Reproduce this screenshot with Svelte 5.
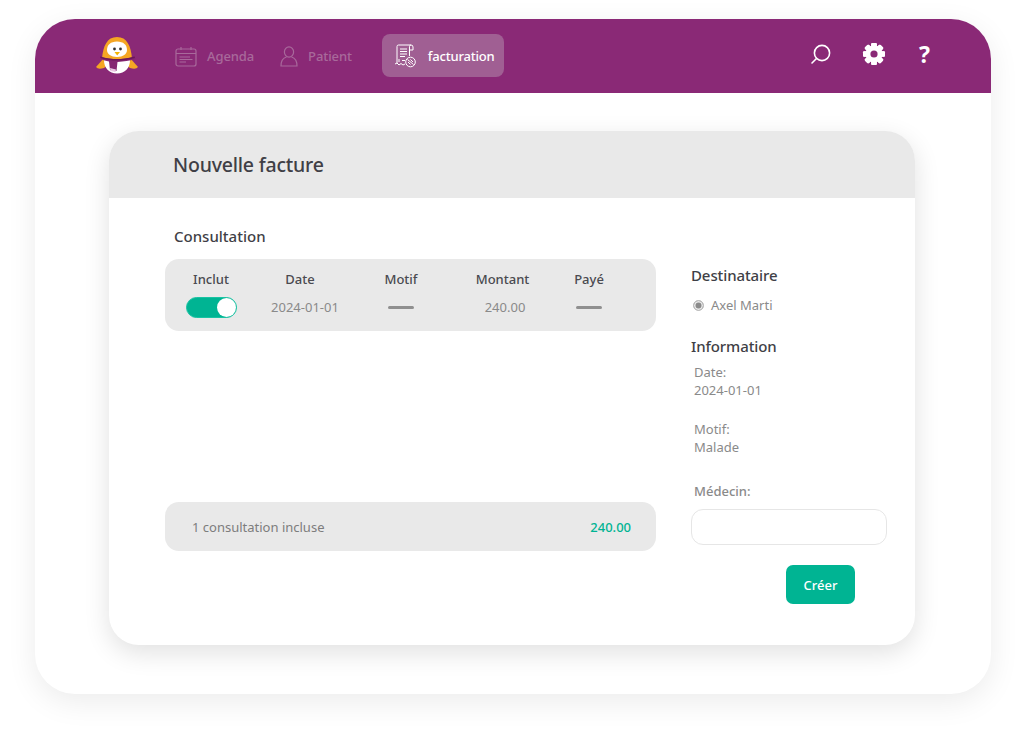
<script>
	let included = $state(true);
	const rows = [{ date: '2024-01-01', amount: '240.00' }];
	const teeth = [0, 45, 90, 135, 180, 225, 270, 315];
</script>

<div class="page">
	<div class="window">
		<header class="topbar">
			<svg class="logo" width="44" height="42" viewBox="0 0 44 42" aria-label="Logo">
				<path d="M8 23 L0 32 Q2 35 8 33 L12 30 Z" fill="#f5a623" />
				<path d="M34 23 L42 32 Q40 35 34 33 L30 30 Z" fill="#f5a623" />
				<path d="M21 2 C11 2 7 11 6 24 L36 24 C35 11 31 2 21 2 Z" fill="#f5a623" />
				<path d="M21 6.5 C14.5 6.5 11 10 11 15 C11 19 15 22 21 22 C27 22 31 19 31 15 C31 10 27.5 6.5 21 6.5 Z" fill="#fff" />
				<path d="M8 25 C8 33 13 38.5 21 38.5 C29 38.5 34 33 34 25 Z" fill="#fff" />
				<path d="M4 21.5 C10 23.5 16 24 21 24 C26 24 32 23.5 38.5 21.5 L39.5 24 C33 26 28 26.5 21.5 27 L20.5 36 L14 35 L13 26.5 C10 26 7 25 5 24 Z" fill="#862672" />
				<path d="M4 21.5 C10 23.5 16 24 21 24 C26 24 32 23.5 38.5 21.5 L39 23 C32 25 26 25.5 21 25.5 C16 25.5 10 25 4.5 23 Z" fill="#6a1859" />
				<path d="M14 33 L20 34.5 L19.5 37 L14.5 36 Z" fill="#e9c6e0" />
				<circle cx="18.5" cy="14" r="1.4" fill="#333" />
				<circle cx="24.5" cy="14" r="1.4" fill="#333" />
				<path d="M18.5 17 L24 17 L21.2 20.5 Z" fill="#f5b400" />
			</svg>
			<nav class="nav">
				<a class="nav-item" href="#agenda">
					<svg width="22" height="21" viewBox="0 0 22 21" fill="none" stroke="currentColor" stroke-width="1.2">
						<rect x="1" y="3" width="20" height="17" rx="2" />
						<path d="M1 7.5 H21 M6 1 V4 M16 1 V4 M4.5 11 H15 M4.5 13.5 H17.5 M4.5 16 H11" />
					</svg>
					<span>Agenda</span>
				</a>
				<a class="nav-item" href="#patient">
					<svg width="18" height="21" viewBox="0 0 18 21" fill="none" stroke="currentColor" stroke-width="1.2">
						<ellipse cx="9" cy="6" rx="4.6" ry="5.2" />
						<path d="M6.5 11 C3 12 1 15 1 20 H17 C17 15 15 12 11.5 11" />
					</svg>
					<span>Patient</span>
				</a>
				<a class="nav-item active" href="#facturation">
					<svg width="22" height="24" viewBox="0 0 22 24" fill="none" stroke="currentColor" stroke-width="1">
						<path d="M3 19 V2.5 Q3 1 4.5 1 H17 Q15.5 1 15.5 2.5 V12 M17 1 Q19 1 19 3 V6 H15.5" />
						<path d="M6 5 H13 M6 7.5 H13 M6 10 H13 M6 12.5 H11 M5 15 V18 M8 16.5 H11" />
						<path d="M1 20 L3 19 L5 21 L7 19.5 L9 21 L11 20" />
						<circle cx="16.5" cy="18" r="4.8" />
						<path d="M13.5 15.5 L19.5 20.5 M14 18 L16.5 20.5 M16.5 15.5 L19 18" />
					</svg>
					<span>facturation</span>
				</a>
			</nav>
			<div class="tools">
				<svg width="22" height="22" viewBox="0 0 22 22" fill="none" stroke="#fff" stroke-width="1.6" aria-label="Rechercher">
					<circle cx="12" cy="10" r="7.6" />
					<path d="M6.5 15.5 L2 20" stroke-linecap="round" />
				</svg>
				<svg width="24" height="24" viewBox="0 0 24 24" aria-label="Réglages">
					{#each teeth as angle}
						<rect x="9.2" y="1" width="5.6" height="22" rx="1.2" fill="#fff" transform="rotate({angle} 12 12)" />
					{/each}
					<circle cx="12" cy="12" r="8.4" fill="#fff" />
					<circle cx="12" cy="12" r="3.6" fill="#8a2976" />
				</svg>
				<span class="help">?</span>
			</div>
		</header>

		<main class="content">
			<section class="card">
				<h1 class="card-title">Nouvelle facture</h1>
				<div class="card-body">
					<div class="left">
						<h2 class="consult-title">Consultation</h2>
						<div class="table">
							<div class="th th-inclut">Inclut</div>
							<div class="th th-date">Date</div>
							<div class="th">Motif</div>
							<div class="th th-montant">Montant</div>
							<div class="th">Payé</div>
							{#each rows as row}
								<button class="toggle" class:on={included} aria-label="Inclut" onclick={() => (included = !included)}>
									<span class="knob"></span>
								</button>
								<div class="td">{row.date}</div>
								<div class="dash"></div>
								<div class="td">{row.amount}</div>
								<div class="dash"></div>
							{/each}
						</div>
						<div class="summary">
							<span>1 consultation incluse</span>
							<strong>240.00</strong>
						</div>
					</div>

					<aside class="right">
						<h3 class="side-title">Destinataire</h3>
						<div class="recipient">
							<span class="radio"></span>
							<span>Axel Marti</span>
						</div>
						<h3 class="side-title info-title">Information</h3>
						<div class="info">Date:<br />2024-01-01</div>
						<div class="info motif">Motif:<br />Malade</div>
						<label class="doctor" for="medecin">Médecin:</label>
						<input id="medecin" class="doctor-input" type="text" />
						<button class="create">Créer</button>
					</aside>
				</div>
			</section>
		</main>
	</div>
</div>

<style>
	:global(body) {
		background: #fff;
		font-family: 'Noto Sans', 'Open Sans', sans-serif;
	}

	.page {
		height: 738px;
		box-sizing: border-box;
		padding: 19px 33px 0 35px;
		overflow: hidden;
	}

	.window {
		height: 675px;
		background: #fff;
		border-radius: 40px;
		box-shadow: 0 8px 30px rgba(0, 0, 0, 0.08);
		overflow: hidden;
	}

	.topbar {
		height: 74px;
		background: #8a2976;
		display: flex;
		align-items: center;
		padding: 0 61px 0 61px;
	}

	.logo {
		margin-top: -1px;
	}

	.nav {
		display: flex;
		align-items: center;
		margin-left: 35px;
	}

	.nav-item {
		display: flex;
		align-items: center;
		gap: 10px;
		color: #a8699b;
		font-size: 13px;
		font-weight: 500;
		letter-spacing: -0.1px;
		text-decoration: none;
		margin-right: 26px;
	}

	.nav-item.active {
		width: 122px;
		height: 43px;
		box-sizing: border-box;
		padding-left: 12px;
		margin: -1px 0 0 4px;
		gap: 12px;
		background: #a05f93;
		border-radius: 8px;
		color: #fff;
		letter-spacing: -0.2px;
	}

	.tools {
		margin-left: auto;
		margin-top: -4px;
		display: flex;
		align-items: center;
		gap: 30px;
	}

	.help {
		color: #fff;
		font-size: 23px;
		font-weight: 700;
		line-height: 24px;
		margin-left: 3px;
	}

	.content {
		padding: 38px 76px 0 74px;
	}

	.card {
		height: 514px;
		background: #fff;
		border-radius: 30px;
		box-shadow: 0 8px 26px rgba(0, 0, 0, 0.12);
		overflow: hidden;
		display: flex;
		flex-direction: column;
	}

	.card-title {
		height: 67px;
		margin: 0;
		padding-left: 64px;
		background: #e9e9e9;
		color: #3f3f46;
		font-size: 19.5px;
		font-weight: 500;
		letter-spacing: -0.2px;
		line-height: 67px;
	}

	.card-body {
		flex: 1;
		display: flex;
		padding: 28px 28px 0 56px;
	}

	.left {
		width: 491px;
		height: 325px;
		display: flex;
		flex-direction: column;
	}

	.consult-title {
		margin: 0 0 13px 9px;
		color: #3f3f46;
		font-size: 15px;
		font-weight: 500;
		line-height: 20px;
	}

	.table {
		height: 72px;
		box-sizing: border-box;
		padding-left: 16px;
		background: #e9e9e9;
		border-radius: 14px;
		display: grid;
		grid-template-columns: 60px 128px 64px 144px 24px;
		grid-template-rows: 40px 16px;
		justify-items: center;
		align-items: center;
		align-content: start;
	}

	.th {
		color: #4a4a50;
		font-size: 13px;
		font-weight: 500;
	}

	.th-date {
		padding-right: 10px;
	}

	.th-montant {
		padding-right: 5px;
	}

	.td {
		color: #8a8a8a;
		font-size: 13px;
	}

	.dash {
		width: 26px;
		height: 3px;
		background: #8f8f8f;
		border-radius: 2px;
	}

	.toggle {
		width: 51px;
		height: 21px;
		padding: 0;
		border: 1px solid #19c3a3;
		border-radius: 11px;
		background: #ddd;
		display: flex;
		align-items: center;
		justify-content: flex-start;
		box-sizing: border-box;
	}

	.toggle.on {
		background: #00b493;
		justify-content: flex-end;
	}

	.knob {
		width: 19px;
		height: 19px;
		border-radius: 50%;
		background: #fff;
	}

	.summary {
		margin-top: auto;
		height: 49px;
		display: flex;
		align-items: center;
		justify-content: space-between;
		padding: 0 25px 0 27px;
		background: #e9e9e9;
		border-radius: 14px;
		color: #7d7d7d;
		font-size: 13px;
	}

	.summary strong {
		color: #00b493;
		font-weight: 500;
	}

	.right {
		width: 196px;
		margin-left: 35px;
		margin-top: 39px;
		display: flex;
		flex-direction: column;
	}

	.side-title {
		margin: 0;
		color: #3f3f46;
		font-size: 15px;
		font-weight: 500;
		letter-spacing: -0.1px;
		line-height: 20px;
	}

	.recipient {
		display: flex;
		align-items: center;
		gap: 7px;
		margin: 10px 0 0 2px;
		color: #8a8a8a;
		font-size: 13px;
		line-height: 20px;
	}

	.radio {
		width: 11px;
		height: 11px;
		box-sizing: border-box;
		border-radius: 50%;
		border: 1px solid #bdbdbd;
		background: #8a8a8a;
		box-shadow: inset 0 0 0 1.5px #e9e9e9;
	}

	.info-title {
		margin-top: 21px;
	}

	.info {
		margin: 7px 0 0 3px;
		color: #8a8a8a;
		font-size: 13px;
		line-height: 18px;
	}

	.motif {
		margin-top: 21px;
	}

	.doctor {
		margin: 26px 0 0 3px;
		color: #8a8a8a;
		font-size: 13px;
		font-weight: 500;
		line-height: 18px;
	}

	.doctor-input {
		height: 36px;
		margin-top: 9px;
		box-sizing: border-box;
		border: 1px solid #e6e6e6;
		border-radius: 12px;
		background: #fff;
	}

	.create {
		width: 69px;
		height: 39px;
		margin: 20px 0 0 95px;
		border: none;
		border-radius: 7px;
		background: #00b493;
		color: #fff;
		font-family: inherit;
		font-size: 13px;
		font-weight: 500;
	}
</style>
